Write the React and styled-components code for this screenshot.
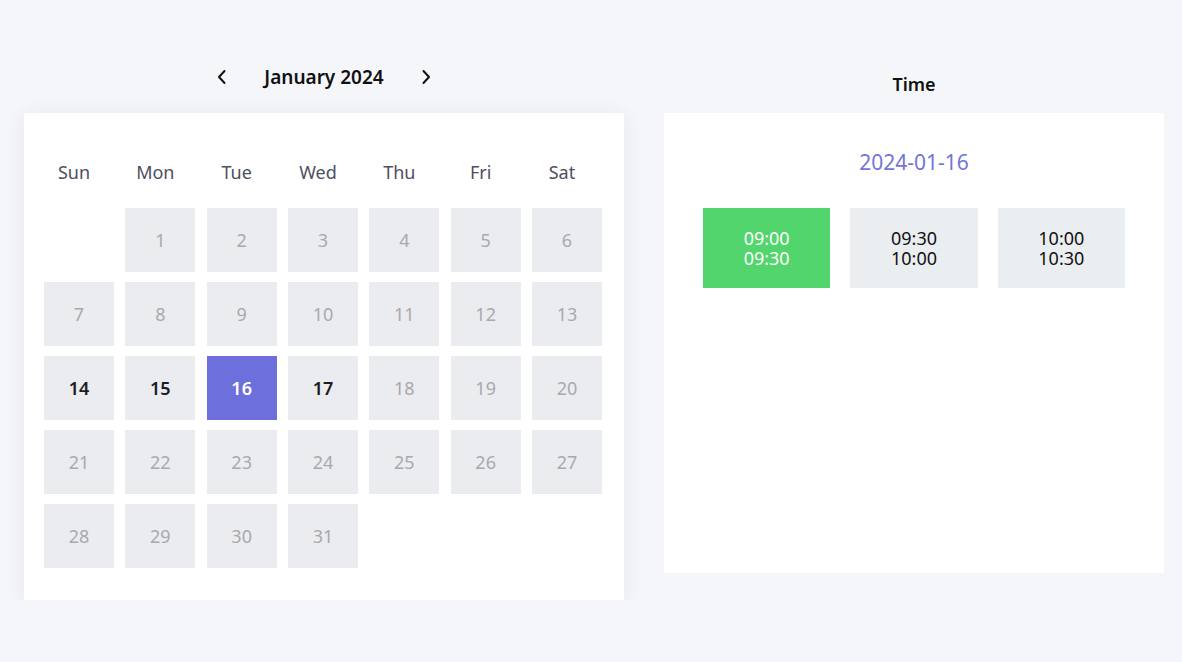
import React from "react";
import styled, { createGlobalStyle } from "styled-components";

const Global = createGlobalStyle`
  html, body { margin: 0; padding: 0; }
  body {
    background: #f5f6fa;
    font-family: "Noto Sans", "Open Sans", sans-serif;
    color: #111;
  }
`;

const Page = styled.div`
  display: flex;
  align-items: flex-start;
  gap: 40px;
  padding-left: 24px;
`;

const Column = styled.div`
  display: flex;
  flex-direction: column;
  width: ${(p) => p.$width}px;
`;

const MonthBar = styled.div`
  display: flex;
  align-items: center;
  justify-content: center;
  gap: 37px;
  height: 34px;
  margin: 60px 0 19px;
`;

const NavButton = styled.button`
  border: none;
  background: none;
  padding: 0;
  width: 10px;
  height: 20px;
  display: flex;
  align-items: center;
  justify-content: center;
  cursor: pointer;
  color: #111;
`;

const MonthTitle = styled.h2`
  margin: 0;
  font-size: 19px;
  font-weight: 600;
  color: #111;
`;

const Card = styled.div`
  background: #fff;
  box-sizing: border-box;
  ${(p) => p.$shadow && "box-shadow: 0 2px 20px rgba(40, 45, 90, 0.07);"}
`;

const CalendarCard = styled(Card)`
  padding: 35px 22px 32px 20px;
`;

const WeekRow = styled.div`
  display: grid;
  grid-template-columns: repeat(7, 70px);
  justify-content: space-between;
  height: 48px;
  margin-bottom: 12px;
`;

const WeekLabel = styled.div`
  display: flex;
  align-items: center;
  justify-content: center;
  padding-right: 10px;
  font-size: 18px;
  color: #4e4f5e;
`;

const DayGrid = styled.div`
  display: grid;
  grid-template-columns: repeat(7, 70px);
  grid-auto-rows: 64px;
  row-gap: 10px;
  justify-content: space-between;
`;

const Day = styled.div`
  display: flex;
  align-items: center;
  justify-content: center;
  font-size: 18px;
  background: ${(p) => (p.$selected ? "#6c6fdc" : "#ebecef")};
  color: ${(p) => (p.$selected ? "#fff" : p.$active ? "#1c1c24" : "#a8a9ae")};
  font-weight: ${(p) => (p.$selected || p.$active ? 600 : 400)};
  cursor: ${(p) => (p.$active || p.$selected ? "pointer" : "default")};
`;

const Blank = styled.div``;

const TimeTitle = styled.h2`
  margin: 72px 0 17px;
  height: 24px;
  line-height: 24px;
  text-align: center;
  font-size: 18px;
  font-weight: 600;
  color: #111;
`;

const TimeCard = styled(Card)`
  height: 460px;
  padding: 35px 39px 0;
`;

const DateLabel = styled.div`
  height: 28px;
  line-height: 28px;
  text-align: center;
  font-size: 21px;
  color: #7474d8;
  margin-bottom: 32px;
`;

const SlotGrid = styled.div`
  display: grid;
  grid-template-columns: repeat(3, 1fr);
  gap: 20px;
`;

const Slot = styled.div`
  height: 80px;
  display: flex;
  flex-direction: column;
  align-items: center;
  justify-content: center;
  font-size: 18px;
  line-height: 20px;
  background: ${(p) => (p.$selected ? "#52d56c" : "#ebeef1")};
  color: ${(p) => (p.$selected ? "#fff" : "#111")};
  cursor: pointer;
`;

const SlotLine = styled.span`
  display: block;
  height: 20px;
`;

const Chevron = ({ dir }) => (
  <svg width="10" height="16" viewBox="0 0 10 16" fill="none">
    <path
      d={dir === "left" ? "M7.5 2 L2 8 L7.5 14" : "M2.5 2 L8 8 L2.5 14"}
      stroke="currentColor"
      strokeWidth="2"
      strokeLinecap="round"
      strokeLinejoin="round"
    />
  </svg>
);

const weekdays = ["Sun", "Mon", "Tue", "Wed", "Thu", "Fri", "Sat"];
const activeDays = [14, 15, 17];
const selectedDay = 16;
const slots = [
  ["09:00", "09:30"],
  ["09:30", "10:00"],
  ["10:00", "10:30"],
];

export default function App() {
  const days = Array.from({ length: 31 }, (_, i) => i + 1);
  return (
    <>
      <Global />
      <Page>
        <Column $width={600}>
          <MonthBar>
            <NavButton aria-label="Previous month">
              <Chevron dir="left" />
            </NavButton>
            <MonthTitle>January 2024</MonthTitle>
            <NavButton aria-label="Next month">
              <Chevron dir="right" />
            </NavButton>
          </MonthBar>
          <CalendarCard $shadow>
            <WeekRow>
              {weekdays.map((w) => (
                <WeekLabel key={w}>{w}</WeekLabel>
              ))}
            </WeekRow>
            <DayGrid>
              <Blank />
              {days.map((d) => (
                <Day
                  key={d}
                  $selected={d === selectedDay}
                  $active={activeDays.includes(d)}
                >
                  {d}
                </Day>
              ))}
            </DayGrid>
          </CalendarCard>
        </Column>
        <Column $width={500}>
          <TimeTitle>Time</TimeTitle>
          <TimeCard>
            <DateLabel>2024-01-16</DateLabel>
            <SlotGrid>
              {slots.map(([a, b], i) => (
                <Slot key={a} $selected={i === 0}>
                  <SlotLine>{a}</SlotLine>
                  <SlotLine>{b}</SlotLine>
                </Slot>
              ))}
            </SlotGrid>
          </TimeCard>
        </Column>
      </Page>
    </>
  );
}
